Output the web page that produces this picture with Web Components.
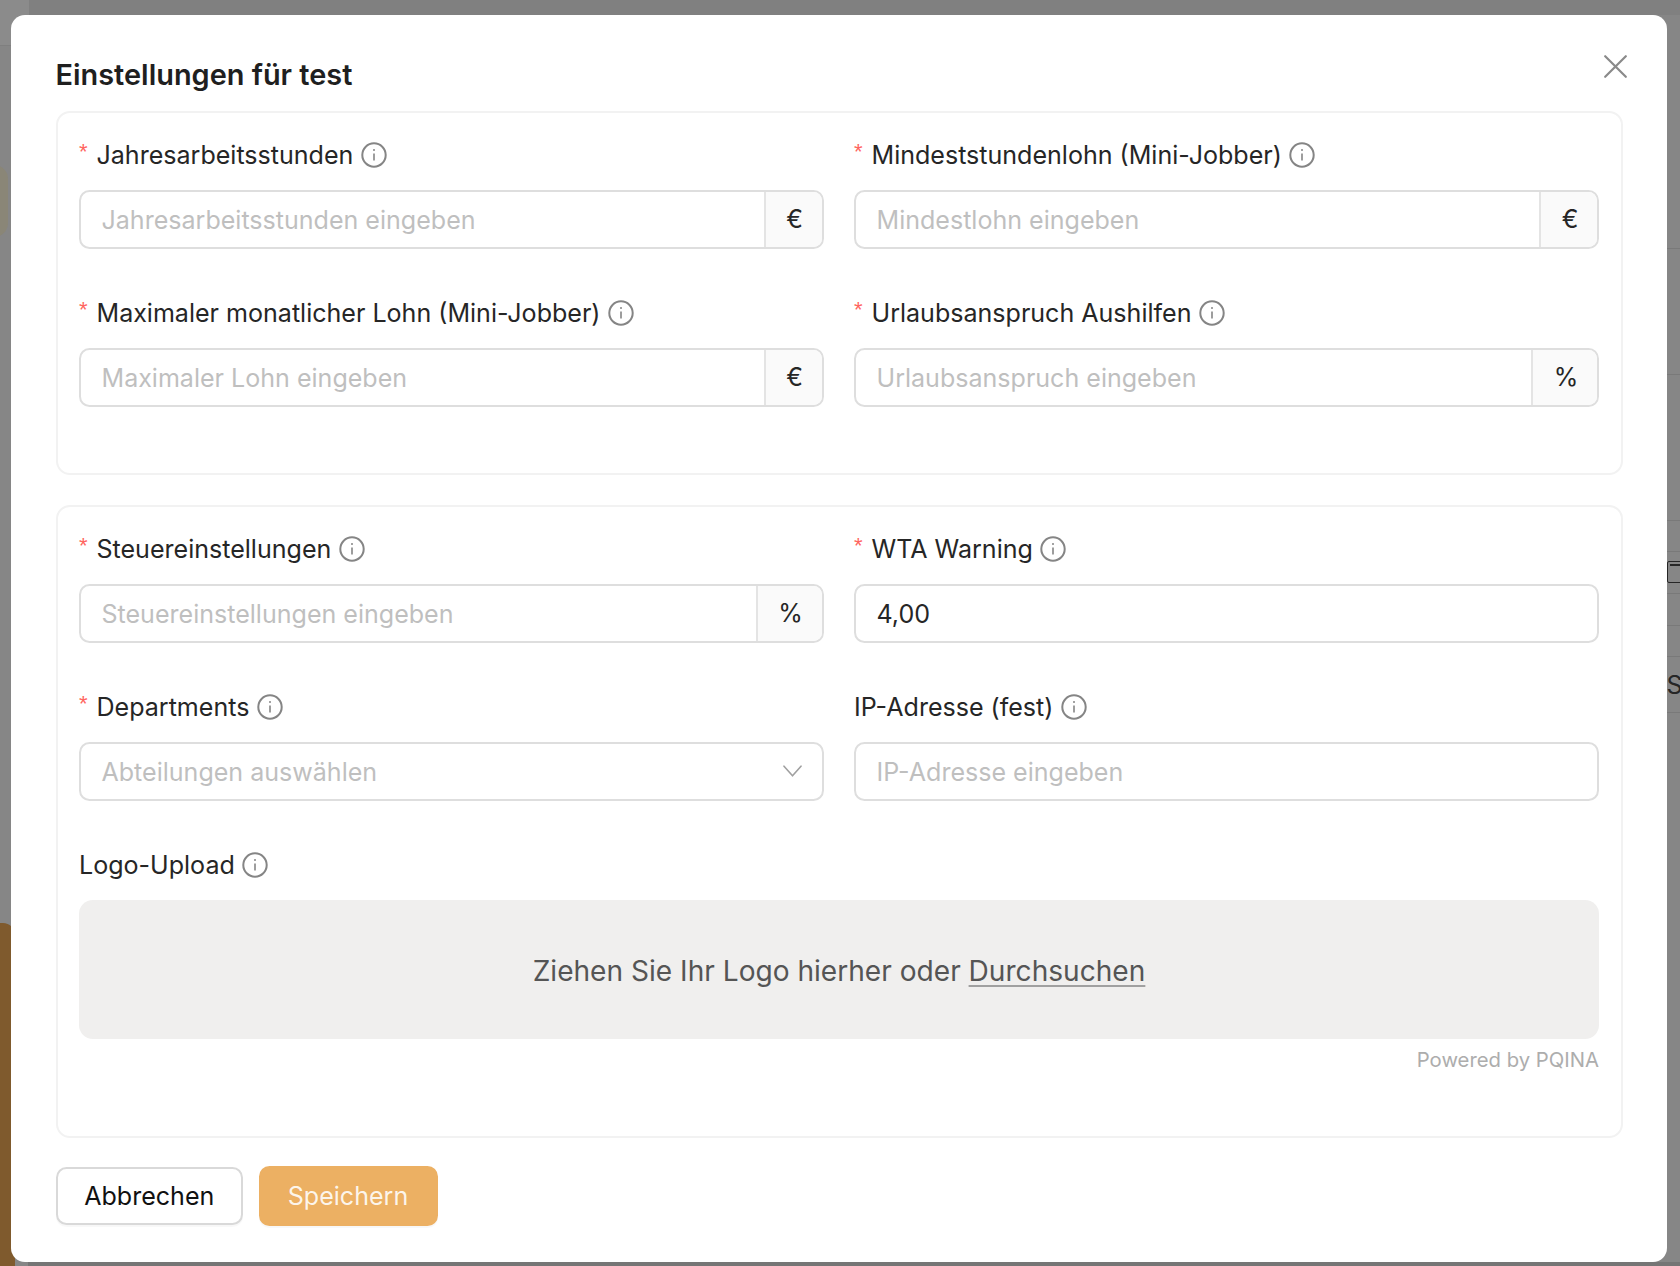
<!DOCTYPE html>
<html lang="de">
<head>
<meta charset="utf-8">
<title>Einstellungen für test</title>
<style>
  html, body { margin: 0; padding: 0; background: #868686; }
  body { font-family: Inter, "Liberation Sans", sans-serif; }
</style>
</head>
<body>
<template id="t-page">
  <style>
    :host { display: block; position: relative; box-sizing: border-box; width: 1680px; height: 1266px; overflow: hidden;
      padding: 14.5px 13px 4px 11px; background-color: #868686; }
    .sliver { position: absolute; }
    .top-left { left: 0; top: 0; width: 29px; height: 45px; background: #8b8b8b; border-bottom: 1px solid #7f7f7f; }
    .top-right { left: 29px; top: 0; right: 0; height: 15px; background: #808080; }
    .blob { left: -22px; top: 165px; width: 30px; height: 72px; border-radius: 14px; background: #8a8677; }
    .brown { left: -20px; top: 923px; width: 35px; height: 360px; border-radius: 12px; background: #7f5a2d; }
    .bottom { left: 28px; right: 0; bottom: 0; height: 4px; background: #757575; }
    .rule { right: 0; width: 13px; height: 1px; background: #797979; }
    .case { right: -6px; top: 561px; width: 17px; height: 20px; border: 1.5px solid #262626; border-radius: 2px; box-sizing: content-box; }
    .case::before { content: ""; position: absolute; left: 2px; right: 0; top: 2px; height: 2px; background: #262626; }
    .s { left: 1666.5px; top: 670px; font: 400 25px/30px Inter, "Liberation Sans", sans-serif; color: #262626; }
  </style>
  <div class="sliver top-left"></div><div class="sliver top-right"></div>
  <div class="sliver blob"></div><div class="sliver brown"></div><div class="sliver bottom"></div>
  <div class="sliver rule" style="top:248px"></div><div class="sliver rule" style="top:374px"></div>
  <div class="sliver rule" style="top:520px"></div><div class="sliver rule" style="top:551px"></div>
  <div class="sliver rule" style="top:593px"></div><div class="sliver rule" style="top:625px"></div>
  <div class="sliver rule" style="top:656px"></div><div class="sliver rule" style="top:712px"></div>
  <div class="sliver case"></div><div class="sliver s">S</div>
  <slot></slot>
</template>

<template id="t-modal">
  <style>
    :host { display: block; position: relative; box-sizing: border-box; height: 1247.5px; background: #fff; border-radius: 14px;
      padding: 43px 44.5px 0; font-family: Inter, "Liberation Sans", sans-serif; }
    h2 { margin: 0 0 19.5px; font-size: 28.9px; line-height: 34px; font-weight: 600; color: #1f1f1f; }
    .close { position: absolute; right: 40px; top: 40.5px; width: 23px; height: 23px; display: block; }
    .stack { display: flex; flex-direction: column; gap: 30px; }
    .foot { display: flex; gap: 15.5px; margin-top: 28px; align-items: center; }
  </style>
  <h2 id="title"></h2>
  <svg class="close" viewBox="0 0 23 23" fill="none" stroke="#8a8a8a" stroke-width="2.2" stroke-linecap="round"><path d="M1.2 1.2 21.8 21.8M21.8 1.2 1.2 21.8"/></svg>
  <div class="stack"><slot></slot></div>
  <div class="foot"><slot name="footer"></slot></div>
</template>

<template id="t-card">
  <style>
    :host { display: grid; box-sizing: border-box; grid-template-columns: 744.5px 745px; column-gap: 30.5px; row-gap: 49.5px; align-content: start;
      border: 2px solid #f2f2f2; border-radius: 14px; padding: 27px 21.5px 0 21.5px; }
  </style>
  <slot></slot>
</template>

<template id="t-field">
  <style>
    :host { display: block; min-width: 0; }
    :host([wide]) { grid-column: 1 / -1; }
    .label { display: flex; align-items: center; height: 30px; margin-bottom: 19.5px; font-size: 25.05px; color: #262626; white-space: nowrap; }
    .req { color: #ff6560; width: 17.5px; flex: none; font-size: 22px; font-family: "Liberation Sans", sans-serif; line-height: 24px; align-self: flex-start; }
    svg { width: 26px; height: 26px; margin-left: 7.5px; flex: none; display: block; }
  </style>
  <div class="label"><span class="req" id="req">*</span><span id="text"></span>
    <svg viewBox="0 0 26 26" fill="none" stroke="#858585"><circle cx="13" cy="13" r="11.7" stroke-width="2"/><path d="M13 11.4v7.2" stroke-width="1.6"/><circle cx="13" cy="8" r="1" fill="#858585" stroke="none"/></svg>
  </div>
  <slot></slot>
</template>

<template id="t-input">
  <style>
    :host { display: flex; box-sizing: border-box; height: 59px; border: 2px solid #dedede; border-radius: 10.5px; overflow: hidden; background: #fff; font-size: 25.05px; }
    .val { flex: 1; min-width: 0; display: flex; align-items: center; padding-left: 20.5px; padding-top: 1px; color: #bfbfbf; white-space: nowrap; }
    :host([filled]) .val { color: #262626; }
    .add { flex: none; display: flex; align-items: center; justify-content: center; background: #fafafa; border-left: 2px solid #e4e4e4; color: #262626; box-sizing: border-box; padding-left: 2px; }
    .chev { flex: none; width: 19px; height: 12px; margin: 0 20px 0 0; align-self: center; display: block; }
  </style>
  <div class="val" id="val"></div>
</template>

<template id="t-upload">
  <style>
    :host { display: block; }
    .drop { display: flex; align-items: center; justify-content: center; box-sizing: border-box; height: 139.5px; padding-top: 3px; background: #f0efee; border-radius: 14px; font-size: 28.1px; color: #555; }
    a { color: inherit; text-decoration: underline; text-decoration-color: #a0a0a0; text-underline-offset: 4px; text-decoration-thickness: 2px; margin-left: .28em; }
    .power { margin-top: 8px; text-align: right; font-size: 20.3px; line-height: 26px; color: #adadad; }
  </style>
  <div class="drop"><span>Ziehen Sie Ihr Logo hierher oder</span><a>Durchsuchen</a></div>
  <div class="power">Powered by PQINA</div>
</template>

<template id="t-button">
  <style>
    :host { display: inline-flex; align-items: center; justify-content: center; box-sizing: border-box; height: 58px; border-radius: 10.5px; font-size: 25.05px; border: 2px solid #d9d9d9; background: #fff; color: #111; padding: 0 28px; box-shadow: 0 2px 1px rgba(0,0,0,.03); }
    :host([primary]) { height: 59.5px; background: #ecb063; border-color: #ecb063; color: rgba(255,255,255,.88); }
  </style>
  <slot></slot>
</template>

<script>
  function mount(el, id) {
    const root = el.attachShadow({ mode: "open" });
    root.appendChild(document.getElementById(id).content.cloneNode(true));
    return root;
  }
  class AppPage extends HTMLElement { constructor() { super(); mount(this, "t-page"); } }
  class SettingsModal extends HTMLElement {
    constructor() { super(); this.r = mount(this, "t-modal"); }
    connectedCallback() { this.r.getElementById("title").textContent = this.getAttribute("heading"); }
  }
  class FormCard extends HTMLElement { constructor() { super(); mount(this, "t-card"); } }
  class FormField extends HTMLElement {
    constructor() { super(); this.r = mount(this, "t-field"); }
    connectedCallback() {
      this.r.getElementById("text").textContent = this.getAttribute("label");
      if (!this.hasAttribute("required")) this.r.getElementById("req").remove();
    }
  }
  class TextInput extends HTMLElement {
    constructor() { super(); this.r = mount(this, "t-input"); }
    connectedCallback() {
      this.r.getElementById("val").textContent = this.getAttribute("value") || this.getAttribute("placeholder");
      if (this.hasAttribute("value")) this.setAttribute("filled", "");
      const addon = this.getAttribute("addon");
      if (addon) {
        const a = document.createElement("div");
        a.className = "add"; a.textContent = addon;
        a.style.width = addon === "%" ? "66px" : "58px";
        this.r.appendChild(a);
      }
      if (this.hasAttribute("select")) {
        const t = document.createElement("template");
        t.innerHTML = '<svg class="chev" viewBox="0 0 19 12" fill="none" stroke="#a0a0a0" stroke-width="1.6" stroke-linecap="round" stroke-linejoin="round"><path d="M1 1.2 9.5 10.8 18 1.2"/></svg>';
        this.r.appendChild(t.content);
      }
    }
  }
  class LogoUpload extends HTMLElement { constructor() { super(); mount(this, "t-upload"); } }
  class AppButton extends HTMLElement { constructor() { super(); mount(this, "t-button"); } }
  customElements.define("app-page", AppPage);
  customElements.define("settings-modal", SettingsModal);
  customElements.define("form-card", FormCard);
  customElements.define("form-field", FormField);
  customElements.define("text-input", TextInput);
  customElements.define("logo-upload", LogoUpload);
  customElements.define("app-button", AppButton);
</script>

<app-page>
  <settings-modal heading="Einstellungen für test">
    <form-card style="height:363.5px">
      <form-field required label="Jahresarbeitsstunden"><text-input placeholder="Jahresarbeitsstunden eingeben" addon="€"></text-input></form-field>
      <form-field required label="Mindeststundenlohn (Mini-Jobber)"><text-input placeholder="Mindestlohn eingeben" addon="€"></text-input></form-field>
      <form-field required label="Maximaler monatlicher Lohn (Mini-Jobber)"><text-input placeholder="Maximaler Lohn eingeben" addon="€"></text-input></form-field>
      <form-field required label="Urlaubsanspruch Aushilfen"><text-input placeholder="Urlaubsanspruch eingeben" addon="%"></text-input></form-field>
    </form-card>
    <form-card style="padding-top:27.5px;height:633.5px">
      <form-field required label="Steuereinstellungen"><text-input placeholder="Steuereinstellungen eingeben" addon="%"></text-input></form-field>
      <form-field required label="WTA Warning"><text-input value="4,00"></text-input></form-field>
      <form-field required label="Departments"><text-input placeholder="Abteilungen auswählen" select></text-input></form-field>
      <form-field label="IP-Adresse (fest)"><text-input placeholder="IP-Adresse eingeben"></text-input></form-field>
      <form-field wide label="Logo-Upload"><logo-upload></logo-upload></form-field>
    </form-card>
    <app-button slot="footer" style="width:187.5px">Abbrechen</app-button>
    <app-button slot="footer" primary style="width:179px">Speichern</app-button>
  </settings-modal>
</app-page>
</body>
</html>
